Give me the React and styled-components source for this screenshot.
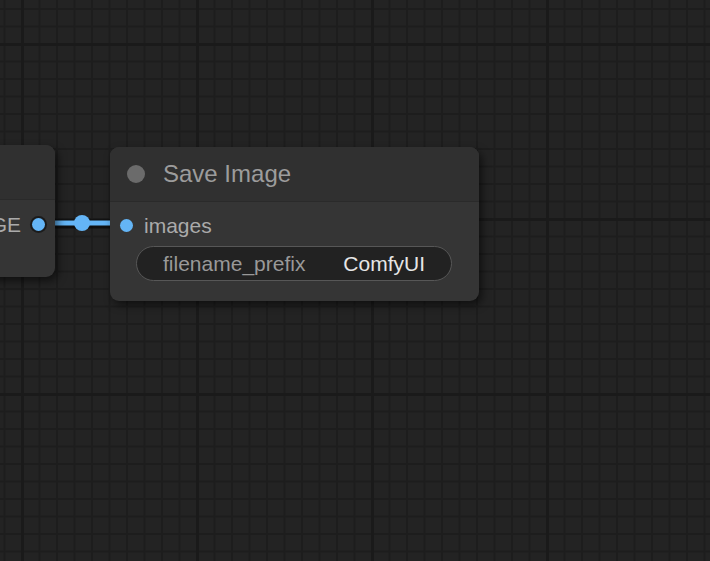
import React from 'react'
import styled, { createGlobalStyle } from 'styled-components'

const GlobalStyle = createGlobalStyle`
  html, body, #root {
    margin: 0;
    padding: 0;
    height: 100%;
  }
  body {
    background: #222;
    font-family: "Liberation Sans", Arial, sans-serif;
    overflow: hidden;
  }
`

const Canvas = styled.div`
  position: relative;
  width: 100%;
  height: 100%;
  overflow: hidden;
  background-color: #232323;
  background-image:
    linear-gradient(to right, #1a1a1a 3px, transparent 3px),
    linear-gradient(to bottom, #1a1a1a 3px, transparent 3px),
    linear-gradient(to right, #1d1d1d 2px, transparent 2px),
    linear-gradient(to bottom, #1d1d1d 2px, transparent 2px);
  background-size: 175px 175px, 175px 175px, 17.5px 17.5px, 17.5px 17.5px;
  background-position: 21px 0, 0 43px, 3.5px 0, 0 8px;
`

const Node = styled.div`
  position: absolute;
  left: ${p => p.x}px;
  top: ${p => p.y}px;
  width: ${p => p.w}px;
  height: ${p => p.h}px;
  background: #353535;
  border-radius: 9px;
  box-shadow: 3px 4px 8px rgba(0, 0, 0, 0.55);
  display: flex;
  flex-direction: column;
  overflow: hidden;
`

const Title = styled.div`
  height: ${p => p.h}px;
  flex-shrink: 0;
  display: flex;
  align-items: center;
  gap: 18px;
  padding-left: 17px;
  background: #303030;
  border-bottom: 1px solid #2a2a2a;
  color: #9c9c9c;
  font-size: 24px;
`

const TitleDot = styled.span`
  width: 18px;
  height: 18px;
  border-radius: 50%;
  background: #6b6b6b;
`

const Body = styled.div`
  display: flex;
  flex-direction: column;
  padding: ${p => p.pad};
`

const SlotRow = styled.div`
  height: 35px;
  display: flex;
  align-items: center;
  justify-content: ${p => (p.out ? 'flex-end' : 'flex-start')};
  gap: 11px;
  padding: ${p => (p.out ? '0 10px 0 0' : '0 0 0 10px')};
  color: #aaa;
  font-size: 21px;
`

const SlotDot = styled.span`
  width: 13px;
  height: 13px;
  border-radius: 50%;
  background: #64b5f6;
  box-shadow: ${p => (p.ring ? '0 0 0 2px #1b1b1b' : 'none')};
  order: ${p => (p.out ? 2 : 0)};
`

const Widget = styled.div`
  height: 35px;
  margin: 3px 27px 0 26px;
  box-sizing: border-box;
  border: 1.5px solid #575757;
  border-radius: 18px;
  background: #222;
  display: flex;
  align-items: center;
  justify-content: space-between;
  padding: 0 26px;
  font-size: 21px;
`

const WidgetLabel = styled.span`
  color: #999;
`

const WidgetValue = styled.span`
  color: #e6e6e6;
`

const LinkLayer = styled.svg`
  position: absolute;
  left: 0;
  top: 0;
  width: 100%;
  height: 100%;
  pointer-events: none;
`

export default function App() {
  return (
    <>
      <GlobalStyle />
      <Canvas>
        <LinkLayer viewBox="0 0 710 561">
          <line x1="45" y1="224" x2="121" y2="224" stroke="rgba(0,0,0,0.55)" strokeWidth="9" />
          <line x1="45" y1="223" x2="121" y2="223" stroke="#64b5f6" strokeWidth="5" />
          <circle cx="82" cy="223" r="8" fill="#64b5f6" />
        </LinkLayer>

        <Node x={-200} y={145} w={255} h={132}>
          <Title h={54} />
          <Body pad="7px 0 0 0">
            <SlotRow out>
              <SlotDot out ring />
              <span>IMAGE</span>
            </SlotRow>
          </Body>
        </Node>

        <Node x={110} y={147} w={369} h={154}>
          <Title h={54}>
            <TitleDot />
            <span>Save Image</span>
          </Title>
          <Body pad="6px 0 0 0">
            <SlotRow>
              <SlotDot />
              <span>images</span>
            </SlotRow>
            <Widget>
              <WidgetLabel>filename_prefix</WidgetLabel>
              <WidgetValue>ComfyUI</WidgetValue>
            </Widget>
          </Body>
        </Node>
      </Canvas>
    </>
  )
}
